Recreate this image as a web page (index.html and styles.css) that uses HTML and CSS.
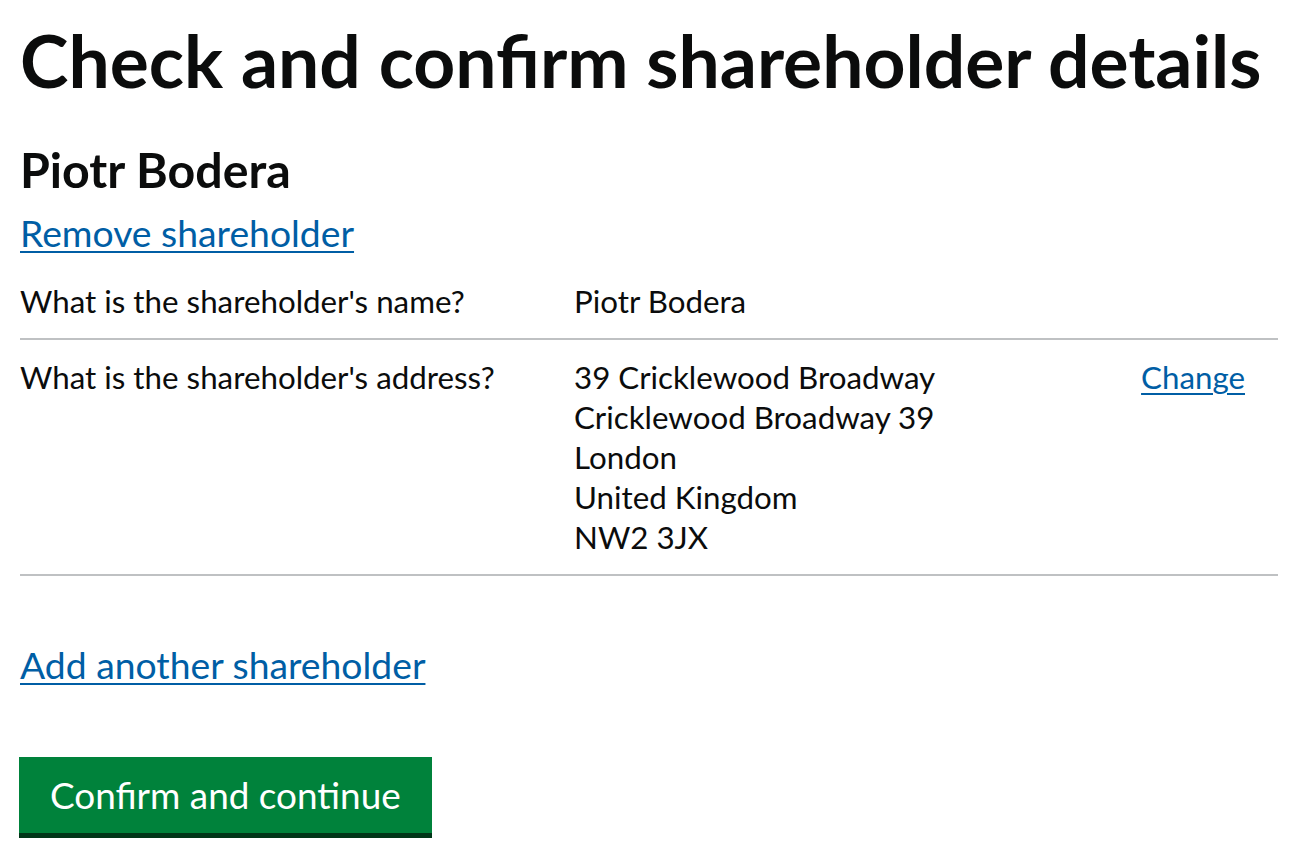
FILE: index.html
```html
<!DOCTYPE html>
<html lang="en">
<head>
<meta charset="utf-8">
<title>Check and confirm shareholder details</title>
<link rel="stylesheet" href="styles.css">
</head>
<body>
<main class="page">
  <h1 class="heading-xl">Check and confirm shareholder details</h1>
  <h2 class="heading-l">Piotr Bodera</h2>
  <a class="link link-lg remove" href="#">Remove shareholder</a>
  <dl class="summary">
    <div class="row">
      <dt class="key">What is the shareholder's name?</dt>
      <dd class="value">Piotr Bodera</dd>
      <dd class="action"></dd>
    </div>
    <div class="row">
      <dt class="key">What is the shareholder's address?</dt>
      <dd class="value">39 Cricklewood Broadway<br>Cricklewood Broadway 39<br>London<br>United Kingdom<br>NW2 3JX</dd>
      <dd class="action"><a class="link" href="#">Change</a></dd>
    </div>
  </dl>
  <a class="link link-lg add" href="#">Add another shareholder</a>
  <div class="actions">
    <button class="button" type="button">Confirm and continue</button>
  </div>
</main>
</body>
</html>
```
FILE: styles.css
```css
* { box-sizing: border-box; }
html, body { margin: 0; padding: 0; background: #ffffff; }
body {
  font-family: "Lato", "Roboto", sans-serif;
  color: #0b0c0c;
}
.page {
  width: 1278px;
  padding-left: 20px;
  display: flex;
  flex-direction: column;
  align-items: flex-start;
}
.heading-xl {
  margin: 20px 0 0;
  font-size: 73.2px;
  line-height: 80px;
  font-weight: 700;
  letter-spacing: 0;
}
.heading-l {
  margin: 41px 0 0;
  font-size: 48.3px;
  line-height: 56px;
  font-weight: 700;
}
.link {
  color: #005ea5;
  text-decoration: underline;
  text-decoration-thickness: 2px;
  text-underline-offset: 4px;
}
.link-lg {
  font-size: 37.3px;
  line-height: 44px;
}
.remove { margin-top: 14px; }
.summary {
  align-self: stretch;
  margin: 9px 0 0;
  font-size: 31.3px;
  line-height: 40px;
}
.row {
  display: grid;
  grid-template-columns: 554px 1fr auto;
  padding: 17px 0;
  border-bottom: 2px solid #bfc1c3;
}
.key, .value, .action { margin: 0; }
.action {
  text-align: right;
  padding-right: 33px;
}
.add { margin-top: 67px; }
.actions { margin-top: 70px; }
.button {
  display: block;
  font-family: "Lato", "Roboto", sans-serif;
  font-size: 36.9px;
  line-height: 44px;
  color: #ffffff;
  background: #00823b;
  border: 0;
  border-bottom: 5px solid #003618;
  border-radius: 0;
  padding: 16px 31px 16px 31px;
  margin: 0 0 0 -1px;
  cursor: pointer;
}
```
